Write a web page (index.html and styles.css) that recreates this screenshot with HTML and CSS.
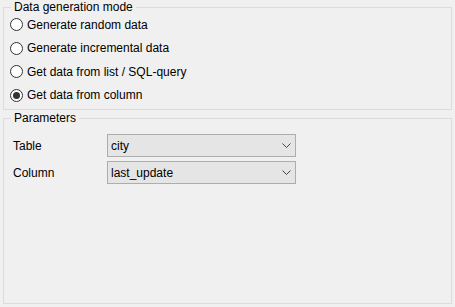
FILE: index.html
```html
<!DOCTYPE html>
<html>
<head>
<meta charset="utf-8">
<link rel="stylesheet" href="styles.css">
</head>
<body>
<div class="panel">
  <fieldset class="group mode">
    <legend>Data generation mode</legend>
    <div class="radios">
      <div class="radio"><span class="circle"></span><span>Generate random data</span></div>
      <div class="radio"><span class="circle"></span><span>Generate incremental data</span></div>
      <div class="radio"><span class="circle"></span><span>Get data from list / SQL-query</span></div>
      <div class="radio"><span class="circle checked"></span><span>Get data from column</span></div>
    </div>
  </fieldset>
  <fieldset class="group params">
    <legend>Parameters</legend>
    <div class="rows">
      <div class="row">
        <span class="lbl">Table</span>
        <div class="combo"><span>city</span><svg class="chev" width="9" height="5" viewBox="0 0 9 5"><path d="M0.5 0.5 L4.5 4.5 L8.5 0.5" fill="none" stroke="#444" stroke-width="1"/></svg></div>
      </div>
      <div class="row">
        <span class="lbl">Column</span>
        <div class="combo"><span>last_update</span><svg class="chev" width="9" height="5" viewBox="0 0 9 5"><path d="M0.5 0.5 L4.5 4.5 L8.5 0.5" fill="none" stroke="#444" stroke-width="1"/></svg></div>
      </div>
    </div>
  </fieldset>
</div>
</body>
</html>
```
FILE: styles.css
```css
html, body {
  margin: 0;
  padding: 0;
  background: #f0f0f0;
  height: 100%;
}
body {
  font-family: "Liberation Sans", Arial, sans-serif;
  font-size: 12px;
  color: #000;
}
.panel {
  height: 307px;
  display: flex;
  flex-direction: column;
  box-sizing: border-box;
  padding: 0 3px 3px 3px;
}
.group {
  margin: 0;
  padding: 0;
  border: 1px solid #dcdcdc;
  min-width: 0;
}
.group legend {
  line-height: 14px;
  margin-left: 7px;
  padding: 0 3px;
}
.mode {
  padding-bottom: 2px;
}
.radios {
  margin-top: -1px;
  padding-left: 6px;
}
.radio {
  height: 23.5px;
  display: flex;
  align-items: center;
}
.circle {
  width: 13px;
  height: 13px;
  box-sizing: border-box;
  border: 1px solid #333;
  border-radius: 50%;
  background: #fff;
  margin-right: 4px;
  display: flex;
  align-items: center;
  justify-content: center;
}
.circle.checked::after {
  content: "";
  width: 7px;
  height: 7px;
  border-radius: 50%;
  background: #333;
}
.params {
  margin-top: 1px;
  flex: 1;
}
.rows {
  padding: 9px 0 0 9px;
  display: flex;
  flex-direction: column;
  gap: 4px;
}
.row {
  display: flex;
  align-items: center;
}
.lbl {
  width: 94px;
}
.combo {
  width: 189px;
  height: 23px;
  box-sizing: border-box;
  border: 1px solid #adadad;
  background: #e5e5e5;
  display: flex;
  align-items: center;
  justify-content: space-between;
  padding: 0 4px 0 3px;
}
.chev {
  display: block;
}
```
